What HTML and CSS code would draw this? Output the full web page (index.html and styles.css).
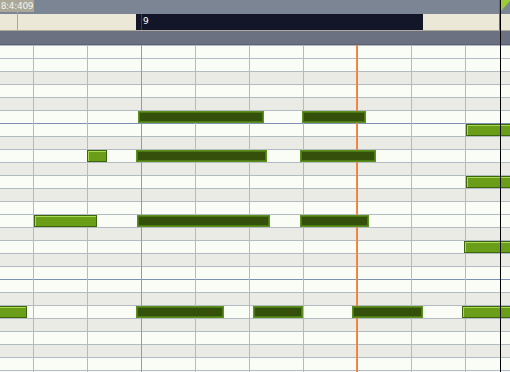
FILE: index.html
```html
<!DOCTYPE html>
<html lang="en">
<head>
    <meta charset="UTF-8">
    <title>Piano Roll</title>
    <link rel="stylesheet" href="styles.css">
</head>
<body>

    <div class="editor">
        <div class="topbar">
            <span class="pos">8:4:409</span>
        </div>
        <div class="ruler">
            <div class="loop"><span class="bar-num">9</span></div>
        </div>
        <div class="strip"></div>
        <div class="grid" id="grid"></div>

        <div class="pos-marker"></div>
        <div class="playhead"><span class="flag"></span></div>
    </div>

    <script>
        // b = black key row, o = octave line above the row
        var keys = ['w', 'w', 'b', 'w', 'b', 'w', 'wo', 'b', 'w', 'b', 'w', 'b', 'w',
                    'w', 'b', 'w', 'b', 'w', 'wo', 'b', 'w', 'b', 'w', 'b', 'w', 'w'];

        // [row, x, width, selected]
        var notes = [
            [5, 138, 126, 1], [5, 302, 64, 1],
            [6, 466, 60, 0],
            [8, 87, 20, 0], [8, 136, 131, 1], [8, 300, 76, 1],
            [10, 466, 60, 0],
            [13, 34, 63, 0], [13, 137, 133, 1], [13, 300, 69, 1],
            [15, 464, 60, 0],
            [20, -4, 31, 0], [20, 136, 88, 1], [20, 253, 50, 1], [20, 352, 71, 1], [20, 462, 60, 0]
        ];

        var grid = document.getElementById('grid');

        for (var i = 0; i < keys.length; i++) {
            var row = document.createElement('div');
            row.className = 'row';
            if (keys[i].indexOf('b') >= 0) row.className += ' black';
            if (keys[i].indexOf('o') >= 0) row.className += ' octave';
            grid.appendChild(row);
        }

        var lines = document.createElement('div');
        lines.className = 'lines';
        grid.appendChild(lines);

        var loopEnd = document.createElement('div');
        loopEnd.className = 'loop-end';
        grid.appendChild(loopEnd);

        for (var n = 0; n < notes.length; n++) {
            var note = document.createElement('div');
            note.className = notes[n][3] ? 'note selected' : 'note';
            note.style.top = (notes[n][0] * 13 + 1) + 'px';
            note.style.left = notes[n][1] + 'px';
            note.style.width = notes[n][2] + 'px';
            grid.appendChild(note);
        }
    </script>

</body>
</html>
```

FILE: styles.css
```css
body {
    margin: 0;
    background-color: #fafdf5;
    font-family: 'DejaVu Sans', sans-serif;
    overflow: hidden;
}

.editor {
    position: relative;
    width: 510px;
    height: 372px;
    overflow: hidden;
    display: flex;
    flex-direction: column;
}

.topbar,
.ruler,
.strip {
    flex-shrink: 0;
}

.topbar {
    height: 14px;
    background-color: #7b8594;
    display: flex;
    align-items: flex-start;
}

.pos {
    width: 34px;
    height: 12px;
    background-color: #a9a899;
    color: #f4f4ee;
    font-size: 9px;
    line-height: 12px;
    text-align: center;
    letter-spacing: -0.3px;
}

.ruler {
    height: 16px;
    background-color: #ece8d8;
    border-bottom: 1px solid #aeab9c;
    padding-left: 136px;
    display: flex;
}

.loop {
    width: 287px;
    padding-left: 6px;
    box-sizing: border-box;
    background-color: #121628;
    background-image: linear-gradient(to right, transparent 5px, #3c4050 5px 6px, transparent 6px);
}

.bar-num {
    display: block;
    color: #ffffff;
    font-size: 9px;
    line-height: 15px;
    padding-left: 1px;
}

.strip {
    height: 13px;
    background-color: #6b7181;
    border-bottom: 1px solid #5a6070;
}

.grid {
    position: relative;
    flex: 1;
    min-height: 0;
    overflow: hidden;
}

.row {
    height: 12px;
    border-top: 1px solid #b3bac2;
    background-color: #fafdf5;
}

.row.black {
    background-color: #e9ebe4;
}

.row.octave {
    border-top-color: #7d92b2;
}

.lines {
    position: absolute;
    top: 0;
    left: 0;
    right: 0;
    bottom: 0;
    background-image:
        repeating-linear-gradient(to right, #8a9ebc 0 1px, transparent 1px 216px),
        repeating-linear-gradient(to right, #b3bac2 0 1px, transparent 1px 54px);
    background-position: 141px 0, 33px 0;
    background-repeat: repeat-y;
}

.loop-end {
    position: absolute;
    top: 0;
    bottom: 0;
    left: 356px;
    width: 1px;
    background-color: #f4884a;
}

.note {
    position: absolute;
    height: 12px;
    box-sizing: border-box;
    background-color: #6a9e18;
    border: 1px solid #3d650c;
    box-shadow: inset 1px 1px 0 #a9d853;
}

.note.selected {
    background-color: #34500b;
    border: 1px solid #5e9020;
    box-shadow: inset 0 0 0 1px #4a7a12;
}

.pos-marker {
    position: absolute;
    left: 17px;
    top: 12px;
    height: 18px;
    width: 1px;
    background-color: #a9a899;
}

.playhead {
    position: absolute;
    left: 500px;
    top: 0;
    bottom: 0;
    width: 1px;
    background-color: #000000;
}

.playhead::before {
    content: '';
    position: absolute;
    top: 0;
    left: -1px;
    width: 1px;
    height: 30px;
    background-color: #8a4ccc;
}

.flag {
    position: absolute;
    top: 0;
    left: 1px;
    width: 0;
    height: 0;
    border-top: 11px solid #9ccc3a;
    border-right: 10px solid transparent;
}
```
